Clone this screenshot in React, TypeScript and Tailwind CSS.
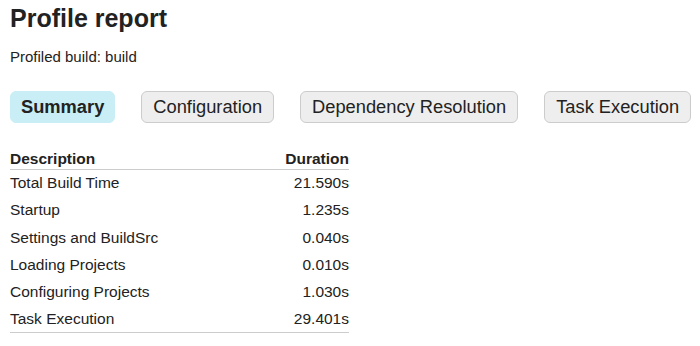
export default function App() {
  const tabs = ["Summary", "Configuration", "Dependency Resolution", "Task Execution"];
  const rows = [
    ["Total Build Time", "21.590s"],
    ["Startup", "1.235s"],
    ["Settings and BuildSrc", "0.040s"],
    ["Loading Projects", "0.010s"],
    ["Configuring Projects", "1.030s"],
    ["Task Execution", "29.401s"],
  ];

  return (
    <div className="min-h-[346px] bg-white px-[10px] pt-[3px] text-[#222] font-['Liberation_Sans',Arial,sans-serif]">
      <h1 className="text-[25px] font-bold leading-[30px]">Profile report</h1>
      <p className="mt-[15px] text-[15px] leading-[18px]">Profiled build: build</p>

      <div className="mt-[25px] flex gap-[26px]">
        {tabs.map((t, i) => (
          <div
            key={t}
            className={
              i === 0
                ? "h-[32px] shrink-0 whitespace-nowrap rounded-[6px] border border-[#c9eef6] bg-[#c9eef6] px-[10px] text-[18.3px] font-bold leading-[30px]"
                : "h-[32px] shrink-0 whitespace-nowrap rounded-[6px] border border-[#ccc] bg-[#eee] px-[11px] text-[18.3px] leading-[30px]"
            }
          >
            {t}
          </div>
        ))}
      </div>

      <table className="mt-[26px] w-[339px] border-collapse text-[15.5px]">
        <thead>
          <tr className="border-b border-[#ccc]">
            <th className="h-[20px] p-0 text-left font-bold leading-[18px]">Description</th>
            <th className="h-[20px] p-0 text-right font-bold leading-[18px]">Duration</th>
          </tr>
        </thead>
        <tbody className="border-b border-[#ccc]">
          {rows.map(([d, v]) => (
            <tr key={d}>
              <td className="h-[27.3px] p-0 text-left">{d}</td>
              <td className="h-[27.3px] p-0 text-right">{v}</td>
            </tr>
          ))}
        </tbody>
      </table>
    </div>
  );
}
